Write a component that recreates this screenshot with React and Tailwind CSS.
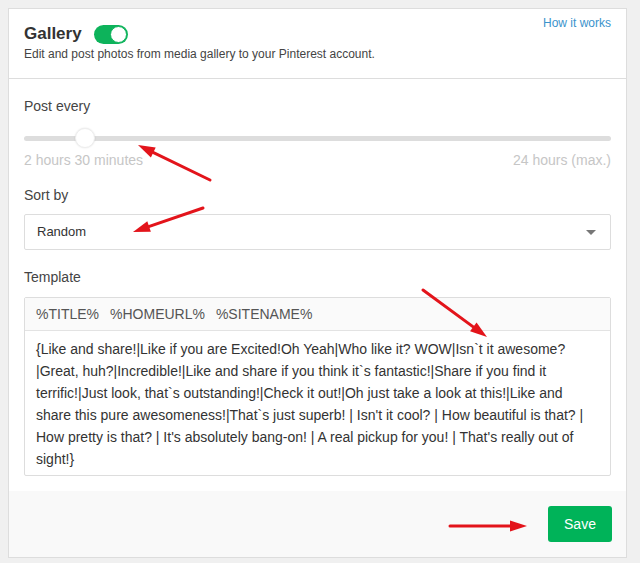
import React from "react";

const templateText =
  "{Like and share!|Like if you are Excited!Oh Yeah|Who like it? WOW|Isn`t it awesome?|Great, huh?|Incredible!|Like and share if you think it`s fantastic!|Share if you find it terrific!|Just look, that`s outstanding!|Check it out!|Oh just take a look at this!|Like and share this pure awesomeness!|That`s just superb! | Isn't it cool? | How beautiful is that? | How pretty is that? | It's absolutely bang-on! | A real pickup for you! | That's really out of sight!}";

// red annotation arrows drawn over the screenshot
const arrows = [
  [210, 180, 138, 145],
  [203, 208, 133, 232],
  [423, 290, 487, 337],
  [450, 526, 527, 526],
];

function Arrow({ x1, y1, x2, y2 }) {
  const dx = x2 - x1;
  const dy = y2 - y1;
  const len = Math.hypot(dx, dy);
  const ux = dx / len;
  const uy = dy / len;
  const head = 17;
  const half = 5.5;
  const bx = x2 - ux * head;
  const by = y2 - uy * head;
  const pts = `${x2},${y2} ${bx - uy * half},${by + ux * half} ${bx + uy * half},${by - ux * half}`;
  return (
    <g>
      <line x1={x1} y1={y1} x2={bx + ux * 2} y2={by + uy * 2} stroke="#e3141b" strokeWidth="3" strokeLinecap="round" />
      <polygon points={pts} fill="#e3141b" />
    </g>
  );
}

export default function App() {
  return (
    <div
      className="relative min-h-[563px] w-[640px] bg-[#f0f0f0] pt-[8px] pl-[8px]"
      style={{ fontFamily: '"Liberation Sans", Arial, sans-serif' }}
    >
      <div className="w-[619px] border border-[#dddddd] bg-white">
        {/* Header */}
        <div className="flex items-start justify-between border-b border-[#dddddd] px-[15px] pt-[5px] pb-[16px]">
          <div className="pt-[9px]">
            <div className="flex h-[22px] items-center">
              <span className="text-[17px] leading-[22px] font-bold text-[#333]">Gallery</span>
              <span className="ml-[12px] flex h-[19px] w-[34px] items-center justify-end rounded-full bg-[#0db35b] pr-[1px]">
                <span className="h-[17px] w-[17px] rounded-full border border-[#0db35b] bg-white" />
              </span>
            </div>
            <p className="mt-[1px] text-[12px] leading-[16px] text-[#444]">
              Edit and post photos from media gallery to your Pinterest account.
            </p>
          </div>
          <a className="mt-[1px] text-[12px] leading-[16px] text-[#3b93cc]">How it works</a>
        </div>

        {/* Body */}
        <div className="px-[15px] pt-[17px] pb-[15px]">
          <div className="text-[14px] leading-[20px] text-[#444]">Post every</div>
          <div className="relative mt-[12px] flex h-[20px] items-center">
            <div className="h-[5px] w-full rounded-full bg-[#dddddd]" />
            <div className="absolute left-[51px] top-0 h-[20px] w-[20px] rounded-full border border-[#eeeeee] bg-white shadow-[0_0_2px_rgba(0,0,0,0.12)]" />
          </div>
          <div className="mt-[2px] flex justify-between text-[14px] leading-[20px] text-[#c6c6c6]">
            <span>2 hours 30 minutes</span>
            <span>24 hours (max.)</span>
          </div>

          <div className="mt-[15px] text-[14px] leading-[20px] text-[#444]">Sort by</div>
          <div className="mt-[9px] flex h-[36px] items-center justify-between rounded-[2px] border border-[#dddddd] pl-[12px] pr-[14px]">
            <span className="text-[13px] text-[#333]">Random</span>
            <span className="h-0 w-0 border-x-[5px] border-t-[5px] border-x-transparent border-t-[#777]" />
          </div>

          <div className="mt-[17px] text-[14px] leading-[20px] text-[#444]">Template</div>
          <div className="mt-[10px] rounded-[2px] border border-[#dddddd]">
            <div className="flex h-[33px] items-center gap-[11px] border-b border-[#e3e3e3] bg-[#fafafa] pl-[11px] text-[14px] text-[#555]">
              <span>%TITLE%</span>
              <span>%HOMEURL%</span>
              <span>%SITENAME%</span>
            </div>
            <p className="pt-[7px] pr-[11px] pb-[5px] pl-[11px] text-[14px] leading-[22px] text-[#333]">
              {templateText}
            </p>
          </div>
        </div>

        {/* Footer */}
        <div className="flex justify-end bg-[#f9f9f9] px-[14px] py-[15px]">
          <button className="h-[36px] w-[64px] rounded-[3px] bg-[#00b359] text-[14px] text-white">Save</button>
        </div>
      </div>

      <svg className="pointer-events-none absolute left-0 top-0" width="640" height="563">
        {arrows.map(([x1, y1, x2, y2], i) => (
          <Arrow key={i} x1={x1} y1={y1} x2={x2} y2={y2} />
        ))}
      </svg>
    </div>
  );
}
